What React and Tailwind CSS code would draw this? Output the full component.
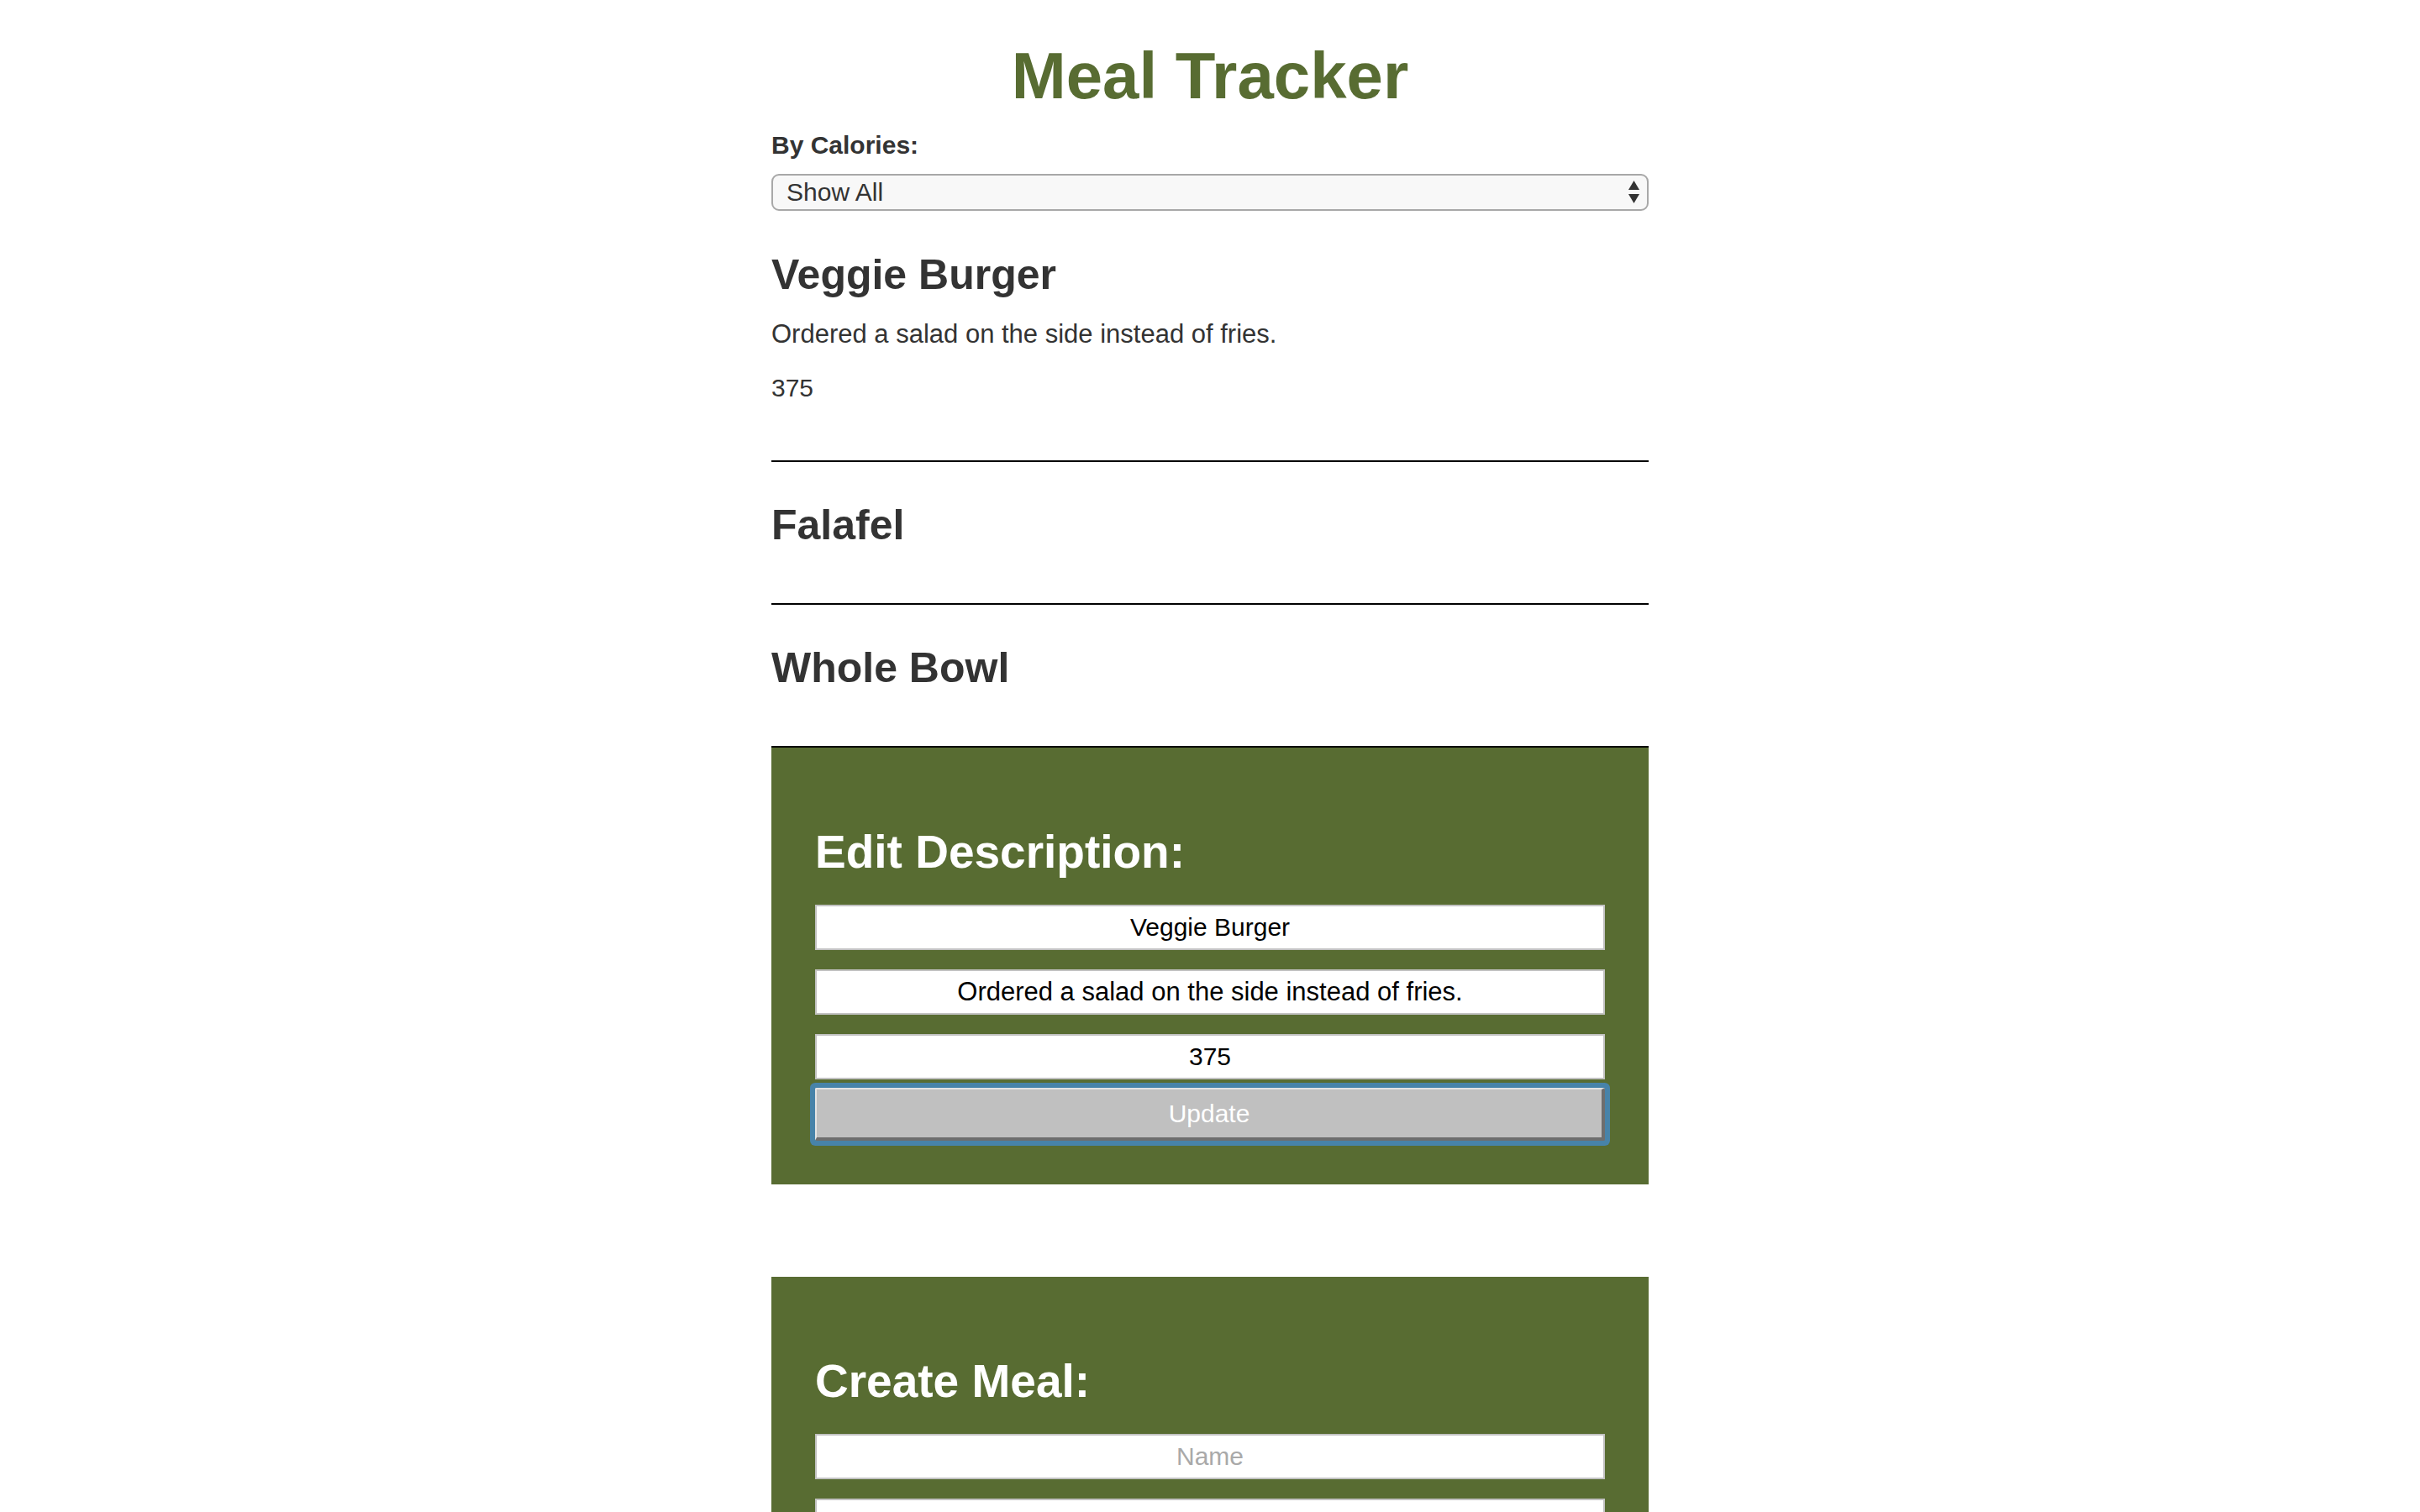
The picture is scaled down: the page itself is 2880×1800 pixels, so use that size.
import React, { useState } from 'react';

const meals = [
  { name: 'Veggie Burger', details: 'Ordered a salad on the side instead of fries.', calories: 375, open: true },
  { name: 'Falafel', details: 'Extra tahini sauce.', calories: 520, open: false },
  { name: 'Whole Bowl', details: 'Brown rice and black beans.', calories: 610, open: false },
];

const SelectArrows = () => (
  <svg className="absolute right-[11px] top-[8px] pointer-events-none" width="13" height="28" viewBox="0 0 13 28">
    <polygon points="6.5,0 13,11 0,11" fill="#333" />
    <polygon points="0,16 13,16 6.5,27" fill="#333" />
  </svg>
);

const Field = ({ value, placeholder, className = '' }) => (
  <input
    type="text"
    defaultValue={value}
    placeholder={placeholder}
    className={`block w-full h-[54px] bg-white border-2 border-[#c2c2c2] text-center text-[30px] text-black placeholder:text-[#a9a9a9] outline-none ${className}`}
  />
);

const App = () => {
  const [filter, setFilter] = useState('all');

  return (
    <div className="min-h-screen bg-white font-['Liberation_Sans',Arial,sans-serif] text-[#333]">
      <div className="w-[1044px] mx-auto pb-[200px]">
        <h1 className="pt-[45px] text-center text-[78px] leading-[90px] font-bold text-[#586c32]">
          Meal Tracker
        </h1>

        <label className="block mt-[21px] text-[30px] leading-[34px] font-bold">By Calories:</label>
        <div className="relative mt-[17px]">
          <select
            value={filter}
            onChange={(e) => setFilter(e.target.value)}
            className="block w-full h-[44px] appearance-none rounded-[9px] border-2 border-[#a8a8a8] bg-[#f8f8f8] pl-[16px] text-[30px] leading-[38px] text-[#333] outline-none"
          >
            <option value="all">Show All</option>
            <option value="low">Under 500</option>
            <option value="high">500 and Over</option>
          </select>
          <SelectArrows />
        </div>

        {meals.map((meal, i) => (
          <div key={meal.name}>
            <h2 className={`${i === 0 ? 'mt-[47px]' : 'mt-[46px]'} text-[50px] leading-[58px] font-bold`}>
              {meal.name}
            </h2>
            {meal.open && (
              <>
                <p className="mt-[25px] text-[31px] leading-[34px]">{meal.details}</p>
                <p className="mt-[30px] text-[30px] leading-[34px]">{meal.calories}</p>
              </>
            )}
            <hr className={`${meal.open ? 'mt-[69px]' : 'mt-[64px]'} border-0 border-t-2 border-black`} />
          </div>
        ))}

        <div className="bg-[#586c32] px-[52px] pt-[93px] pb-[52px]">
          <h2 className="text-[55px] leading-[63px] font-bold text-white">Edit Description:</h2>
          <Field value="Veggie Burger" className="mt-[31px]" />
          <Field value="Ordered a salad on the side instead of fries." className="mt-[23px] text-[31px]" />
          <Field value="375" className="mt-[23px]" />
          <button className="block w-full h-[63px] mt-[10px] bg-[#c0c0c0] border-2 border-t-[#e3e3e3] border-l-[#e3e3e3] border-r-[4px] border-b-[4px] border-r-[#6e6e6e] border-b-[#6e6e6e] rounded-[2px] shadow-[0_0_0_6px_#4783a9] text-[30px] text-white">
            Update
          </button>
        </div>

        <div className="mt-[110px] bg-[#586c32] px-[52px] pt-[93px] pb-[52px]">
          <h2 className="text-[55px] leading-[63px] font-bold text-white">Create Meal:</h2>
          <Field placeholder="Name" className="mt-[31px]" />
          <Field className="mt-[23px]" />
          <Field className="mt-[23px]" />
          <button className="block w-full h-[63px] mt-[10px] bg-[#c0c0c0] border-2 border-t-[#e3e3e3] border-l-[#e3e3e3] border-r-[4px] border-b-[4px] border-r-[#6e6e6e] border-b-[#6e6e6e] text-[30px] text-white">
            Add Meal
          </button>
        </div>
      </div>
    </div>
  );
};

export default App;
